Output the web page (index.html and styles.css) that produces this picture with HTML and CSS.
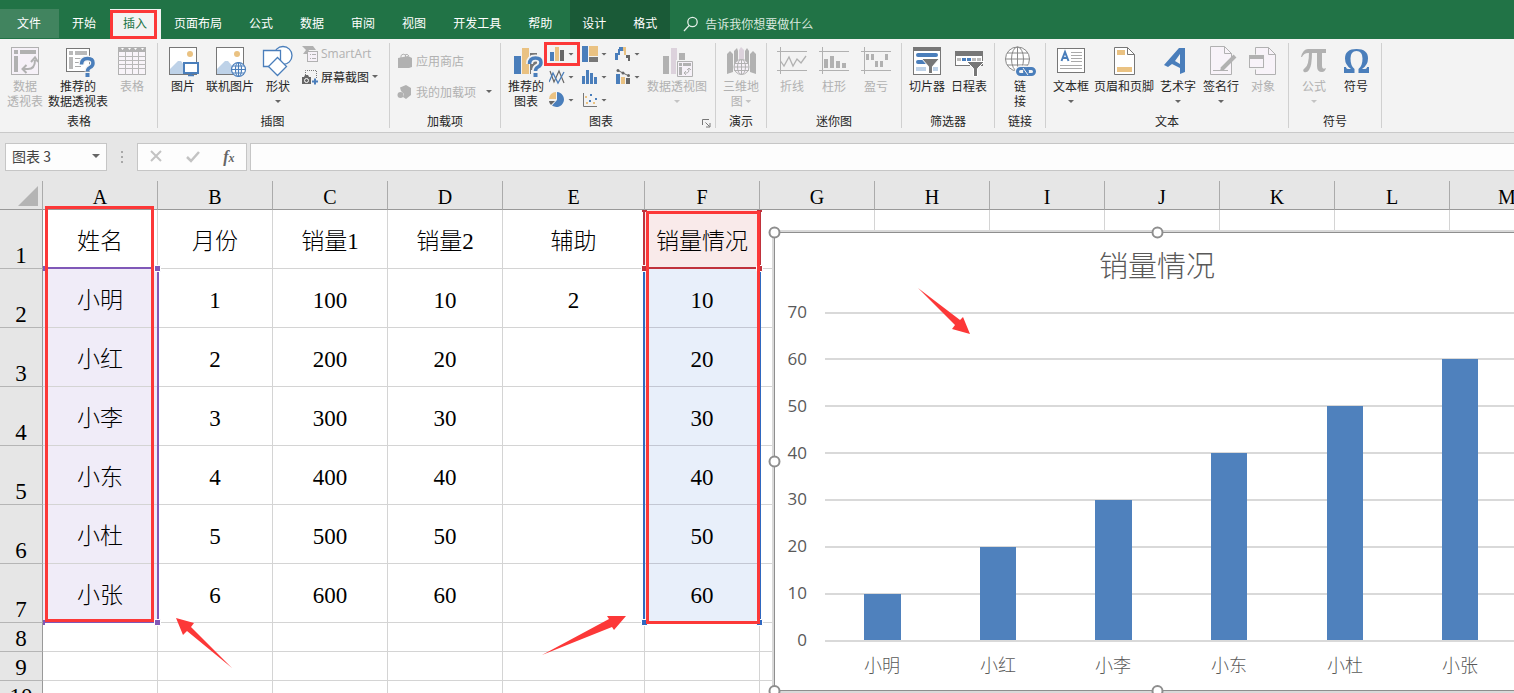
FILE: index.html
```html
<!DOCTYPE html>
<html lang="zh-CN">
<head>
<meta charset="utf-8">
<title>图表 3</title>
<link rel="stylesheet" href="styles.css">
</head>
<body>
<header class="titlebar">
  <nav class="tabs">
    <button class="tab tab-file">文件</button>
    <button class="tab">开始</button>
    <button class="tab tab-active marked">插入</button>
    <button class="tab">页面布局</button>
    <button class="tab">公式</button>
    <button class="tab">数据</button>
    <button class="tab">审阅</button>
    <button class="tab">视图</button>
    <button class="tab">开发工具</button>
    <button class="tab">帮助</button>
  </nav>
  <nav class="tabs tabs-context">
    <button class="tab">设计</button>
    <button class="tab">格式</button>
  </nav>
  <button class="tellme">
    <svg width="16" height="16" viewBox="0 0 16 16" fill="none" stroke="#e4efe8" stroke-width="1.3"><circle cx="9.5" cy="6" r="4.7"/><path d="M6.2 9.4 1 15"/></svg>
    <span>告诉我你想要做什么</span>
  </button>
</header>

<main class="ribbon">
  <section class="group group-tables">
    <div class="group-body">
      <button class="big w46" disabled>
        <svg class="ico" viewBox="0 0 32 32"><rect x="2.5" y="1.5" width="27" height="27" fill="#f6f1f8" stroke="#b1b1b1"/><path fill="#b1b1b1" d="M5 4h4v4H5zM11 4h16v4H11zM5 10h4v16H5z"/><path d="M14 23h5q7 0 7-9M17.5 19 13.5 23l4 4M22 16l4-4.5 3 4.5" fill="none" stroke="#b1b1b1" stroke-width="2"/></svg>
        <span>数据<br>透视表</span>
      </button>
      <button class="big w60">
        <svg class="ico" viewBox="0 0 32 32"><rect x="4.5" y="2.5" width="23" height="23" fill="#fff" stroke="#777"/><path fill="#b9b9b9" d="M7 5h4v4H7zM13 5h12v4H13zM7 11h4v12H7z"/><path d="M13 12.5h9M13 16.5h6M13 20.5h6" stroke="#aaa"/><path d="M19.5 18.5q0-6 6-6 5.5 0 5.5 4.5 0 3-3 4.5-2.5 1.2-2.5 4" fill="none" stroke="#f3f3f3" stroke-width="6"/><path d="M19.5 18.5q0-6 6-6 5.5 0 5.5 4.5 0 3-3 4.5-2.5 1.2-2.5 4" fill="none" stroke="#4a7ebb" stroke-width="3.5"/><rect x="23.5" y="27" width="4" height="4" fill="#4a7ebb"/></svg>
        <span>推荐的<br>数据透视表</span>
      </button>
      <button class="big w48" disabled>
        <svg class="ico" viewBox="0 0 32 32"><rect x="2.5" y="1.5" width="27" height="27" fill="#f8f4f9" stroke="#b1b1b1"/><path fill="#b1b1b1" d="M2 1h28v5H2z"/><path d="M2 10.5h28M2 14.5h28M2 18.5h28M2 22.5h28M9.5 6v23M16.5 6v23M22.5 6v23" stroke="#b8b8b8"/><path fill="#fff" d="M5 2h3l-1.5 2zM12 2h3l-1.5 2zM18 2h3l-1.5 2zM25 2h3l-1.5 2z"/></svg>
        <span>表格</span>
      </button>
    </div>
    <div class="group-name">表格</div>
  </section>

  <section class="group group-pictures">
    <div class="group-body">
      <button class="big w36">
        <svg class="ico" viewBox="0 0 32 32"><rect x="2.5" y="1.5" width="27" height="27" fill="#fff" stroke="#777"/><circle cx="23" cy="8" r="3" fill="#eac282"/><path d="M3 28V23l8-8h3l3 4v9z" fill="#bed2e8"/><rect x="16" y="16" width="16" height="12" fill="#f3f3f3"/><rect x="17" y="17" width="14" height="10" fill="#fff" stroke="#4a7ebb" stroke-width="2"/><path d="M24 27v2M21 29.500h6" stroke="#4a7ebb" stroke-width="1.500"/></svg>
        <span>图片</span>
      </button>
      <button class="big w58">
        <svg class="ico" viewBox="0 0 32 32"><rect x="2.5" y="1.5" width="27" height="27" fill="#fff" stroke="#777"/><circle cx="23" cy="8" r="3" fill="#eac282"/><path d="M3 28V23l8-8h3l6 7v6z" fill="#bed2e8"/><g fill="#fff" stroke="#4a7ebb" stroke-width="1.2"><circle cx="24.5" cy="23.5" r="7"/><ellipse cx="24.5" cy="23.5" rx="3" ry="7" fill="none"/><path d="M17.5 23.5h14M19 20h11M19 27h11M24.5 16.5v14"/></g></svg>
        <span>联机图片</span>
      </button>
      <button class="big w38">
        <svg class="ico" viewBox="0 0 32 32" fill="#fff" stroke="#4a7ebb" stroke-width="1.3"><circle cx="21" cy="9.5" r="9"/><path d="M1.5 4.5h17v16h-17z"/><path d="M15.5 11.5 24.5 20.5 15.5 29.5 6.5 20.5z"/></svg>
        <span>形状</span><i class="caret"></i>
      </button>
      <div class="stack">
        <button class="small" disabled>
          <svg width="16" height="16" viewBox="0 0 16 16"><path d="M0 0h11l3 4H7L5 8H1l3-4z" fill="#b1b1b1"/><rect x="5.5" y="5.5" width="10" height="10" fill="#f6f1f8" stroke="#b1b1b1"/><path d="M8 8.5h1m1 0h4M8 12.5h1m1 0h4" stroke="#b1b1b1"/></svg>
          <span class="latin">SmartArt</span>
        </button>
        <button class="small">
          <svg width="16" height="16" viewBox="0 0 16 16"><path d="M3.5 6V1.5h11v8" fill="none" stroke="#777" stroke-dasharray="1 1"/><path d="M0 8h2l1-2h3l1 2h2v7H0z" fill="#666"/><circle cx="4.5" cy="11.5" r="2" fill="#666" stroke="#fff"/><path d="M13 9.5v6M10 12.5h6" stroke="#4a7ebb" stroke-width="2"/></svg>
          <span>屏幕截图</span><i class="caret"></i>
        </button>
      </div>
    </div>
    <div class="group-name">插图</div>
  </section>

  <section class="group group-addins">
    <div class="group-body">
      <div class="stack stack-wide">
        <button class="small" disabled>
          <svg width="16" height="16" viewBox="0 0 16 16"><path d="M1 5 11 3l4 2v9l-3 1H1z" fill="#b1b1b1"/><path d="M4 5V2.5Q6 0 8.5 2V4M8 2q2-2 4 1" fill="none" stroke="#b1b1b1"/></svg>
          <span>应用商店</span>
        </button>
        <button class="small small-muted">
          <svg width="16" height="16" viewBox="0 0 16 16" fill="#b1b1b1"><path d="M3 3.5 9 1l5 3v7l-5 4-3-2 1-3-3-3z"/><circle cx="3.5" cy="11" r="3"/></svg>
          <span>我的加载项</span><i class="caret"></i>
        </button>
      </div>
    </div>
    <div class="group-name">加载项</div>
  </section>

  <section class="group group-charts">
    <div class="group-body">
      <button class="big">
        <svg class="ico" viewBox="0 0 32 32"><path fill="#4a7ebb" d="M4 10h7v18H4z"/><path fill="#eac282" d="M12 2h7v26h-7z"/><path fill="#777" d="M20 7h7v21h-7z"/><path d="M19.5 18q0-6 6-6 5.5 0 5.5 4.5 0 3-3 4.5-2.5 1.2-2.5 4" fill="none" stroke="#f3f3f3" stroke-width="7"/><path fill="#f3f3f3" d="M21 24h8v8h-8z"/><path d="M19.5 18q0-6 6-6 5.5 0 5.5 4.5 0 3-3 4.5-2.5 1.2-2.5 4" fill="none" stroke="#4a7ebb" stroke-width="3.5"/><rect x="23.5" y="27" width="4" height="4" fill="#4a7ebb"/></svg>
        <span>推荐的<br>图表</span>
      </button>
      <div class="chart-grid">
        <button class="mini marked" aria-label="柱形图"><svg width="16" height="16" viewBox="0 0 16 16"><path fill="#4a7ebb" d="M1 6h4v9H1z"/><path fill="#eac282" d="M6 1h4v14H6z"/><path fill="#666" d="M11 4h4v11h-4z"/></svg><i class="caret"></i></button>
        <button class="mini" aria-label="层次结构图"><svg width="16" height="16" viewBox="0 0 16 16"><path fill="#4a7ebb" d="M0 0h6v16H0z"/><path fill="#eac282" d="M7 0h9v10H7z"/><path fill="#777" d="M7 11h9v5H7z"/></svg><i class="caret"></i></button>
        <button class="mini" aria-label="瀑布图"><svg width="16" height="16" viewBox="0 0 16 16"><path fill="#4a7ebb" d="M0 7h3v7H0zM3 3h1V1h4v4H5v4H3z"/><path fill="#eac282" d="M8 1h3v8H9V5H8z"/><path fill="#666" d="M11 9h4v6h-2v-3h-2z"/></svg><i class="caret"></i></button>
        <button class="mini" aria-label="折线图"><svg width="16" height="16" viewBox="0 0 16 16" fill="none"><path d="M1 2 5 13 10 2l5 12" stroke="#666" stroke-width="1.2"/><path d="M0 13 4 4l5 10 6-11" stroke="#4a7ebb" stroke-width="1.3"/></svg><i class="caret"></i></button>
        <button class="mini" aria-label="直方图"><svg width="16" height="16" viewBox="0 0 16 16"><path fill="#4a7ebb" d="M0 7h3v8H0zM4 1h3v14H4zM8 4h3v11H8zM12 8h3v7h-3z"/></svg><i class="caret"></i></button>
        <button class="mini" aria-label="组合图"><svg width="16" height="16" viewBox="0 0 16 16"><path fill="#4a7ebb" d="M1 5h4v10H1z"/><path fill="#eac282" d="M6 8h4v7H6z"/><path fill="#666" d="M11 9h4v6h-4z"/><path d="M2 1 8 4l6 3" fill="none" stroke="#666"/><g fill="#666"><circle cx="3" cy="1.5" r="1.5"/><circle cx="8" cy="4" r="1.5"/><circle cx="13.5" cy="6.5" r="1.5"/></g></svg><i class="caret"></i></button>
        <button class="mini" aria-label="饼图"><svg width="16" height="16" viewBox="0 0 16 16"><path fill="#4a7ebb" d="M8 8V0a7.500 7.500 0 1 1-5 13.500z"/><path fill="#eac282" d="M7 7V0A7 7 0 0 0 0 7z"/><path fill="#666" d="M0 9h6l-4 4Q0 11 0 9z"/></svg><i class="caret"></i></button>
        <button class="mini" aria-label="散点图"><svg width="16" height="16" viewBox="0 0 16 16"><path d="M1.5 1v13.5H15" fill="none" stroke="#777"/><path fill="#4a7ebb" d="M8 2h2v2H8zM7 8h2v2H7zM13 6h2v2h-2z"/><path fill="#eac282" d="M3 4h2v2H3zM4 10h2v2H4zM11 10h2v2h-2z"/></svg><i class="caret"></i></button>
      </div>
      <button class="big w60" disabled>
        <svg class="ico" viewBox="0 0 32 32"><path fill="#b1b1b1" d="M2 10h6v18H2zM18 7h6v21h-6z"/><path fill="#dcd2dc" d="M10 2h6v26h-6z"/><rect x="15" y="14" width="18" height="18" fill="#f3f3f3"/><path d="M16.5 15.5h15v15h-15z" fill="#f6f1f8" stroke="#b1b1b1"/><path fill="#b1b1b1" d="M18 17h3v3h-3zM22 17h8v3h-8zM18 21h3v8h-3z"/><path d="M23 27h3q2 0 2-4M25 25l-2 2 2 2M26 24l2-2 2 2" fill="none" stroke="#b1b1b1"/></svg>
        <span>数据透视图</span><i class="caret"></i>
      </button>
    </div>
    <div class="group-name">图表</div>
    <button class="launcher" aria-label="图表对话框"><svg width="9" height="9" viewBox="0 0 9 9" fill="none" stroke="#777"><path d="M.5 6V.5H7M3.5 3.5l4 4M8 4v4H4"/></svg></button>
  </section>

  <section class="group">
    <div class="group-body">
      <button class="big" disabled>
        <svg class="ico" viewBox="0 0 32 32"><path fill="#b1b1b1" d="M2 8l3-3 3 3v18l-6 2zM25 8l3-3 3 3v20l-6-2z"/><path fill="#b1b1b1" d="M9 5l3-3 1 3v20H9zM20 5l2-3 2 3v20h-4z"/><path fill="#dcd2dc" d="M14 4l2-3 3 3v14h-5z"/><g fill="#f6f1f8" stroke="#b1b1b1"><circle cx="16.5" cy="21" r="7.5"/><ellipse cx="16.5" cy="21" rx="4" ry="7.5"/><path d="M9 21h15M10 17.500h13M10 24.500h13M16.5 13.500v15"/></g></svg>
        <span>三维地<br>图 <i class="caret caret-inline"></i></span>
      </button>
    </div>
    <div class="group-name">演示</div>
  </section>

  <section class="group">
    <div class="group-body">
      <button class="big" disabled>
        <svg class="ico" viewBox="0 0 32 32"><path d="M1 5.5h30M1 24.5h30M4.5 1v27" stroke="#b1b1b1" fill="none"/><path d="M4.5 15 8 20l5-9 4 9 4-7 4 4 5-7" stroke="#b1b1b1" fill="none" stroke-width="1.3"/></svg>
        <span>折线</span>
      </button>
      <button class="big" disabled>
        <svg class="ico" viewBox="0 0 32 32"><path d="M1 5.5h30M1 24.5h30M4.5 1v27" stroke="#b1b1b1" fill="none"/><path fill="#b1b1b1" d="M6 13h4v9H6zM12 10h4v12h-4zM18 15h4v7h-4zM24 17h4v5h-4z"/></svg>
        <span>柱形</span>
      </button>
      <button class="big" disabled>
        <svg class="ico" viewBox="0 0 32 32"><path d="M1 5.5h30M1 24.5h30M4.5 1v27" stroke="#b1b1b1" fill="none"/><path fill="#b1b1b1" d="M6 8h3v6H6zM11 8h3v6h-3zM15 15h3v6h-3zM20 15h3v6h-3zM25 8h3v6h-3z"/></svg>
        <span>盈亏</span>
      </button>
    </div>
    <div class="group-name">迷你图</div>
  </section>

  <section class="group">
    <div class="group-body">
      <button class="big">
        <svg class="ico" viewBox="0 0 32 32"><rect x="2.5" y="1.5" width="27" height="27" fill="#fff" stroke="#777"/><path fill="#777" d="M2 1h28v4H2z"/><path stroke="#4a7ebb" stroke-width="4" stroke-linecap="round" d="M7 9h18M7 16h8"/><path stroke="#bed2e8" stroke-width="4" d="M5 23h10M22 23h5"/><path fill="#777" stroke="#fff" d="M10.5 12.5h18l-7 8v7h-4v-7z"/></svg>
        <span>切片器</span>
      </button>
      <button class="big">
        <svg class="ico" viewBox="0 0 32 32"><rect x="2.5" y="5.5" width="27" height="14" fill="#fff" stroke="#777"/><path fill="#777" d="M2 5h28v5H2z"/><path fill="#4a7ebb" d="M9 12h4v3H9zM14 12h4v3h-4z"/><path fill="#bbb" d="M4 12h4v3H4zM19 12h4v3h-4zM24 12h4v3h-4z"/><path fill="#777" stroke="#fff" d="M13.5 15.5h18l-7 7v8h-4v-8z"/></svg>
        <span>日程表</span>
      </button>
    </div>
    <div class="group-name">筛选器</div>
  </section>

  <section class="group">
    <div class="group-body">
      <button class="big">
        <svg class="ico" viewBox="0 0 32 32" fill="none"><g stroke="#888" fill="#fff"><circle cx="13.5" cy="13" r="12"/><ellipse cx="13.5" cy="13" rx="6" ry="12"/><path d="M1.5 13h24M3 7h21M3 19h21M13.5 1v24"/></g><g stroke="#f3f3f3" stroke-width="6"><rect x="13.5" y="22.5" width="9" height="6" rx="3"/><rect x="21.5" y="22.5" width="9" height="6" rx="3"/></g><g stroke="#4a7ebb" stroke-width="3"><rect x="13.5" y="22.5" width="10" height="6" rx="3"/><rect x="20.5" y="22.5" width="10" height="6" rx="3"/></g><path d="M19 22l5 7" stroke="#f3f3f3"/></svg>
        <span>链<br>接</span>
      </button>
    </div>
    <div class="group-name">链接</div>
  </section>

  <section class="group">
    <div class="group-body">
      <button class="big">
        <svg class="ico" viewBox="0 0 32 32"><rect x="2.5" y="2.5" width="27" height="24" fill="#fff" stroke="#777"/><path d="M6.5 15 10 6l3.5 9M8 12h4" fill="none" stroke="#4a7ebb" stroke-width="2"/><path d="M16 6.5h11M16 9.5h11M16 12.5h11M16 15.5h11M5 19.5h22M5 22.5h22" stroke="#aaa"/></svg>
        <span>文本框</span><i class="caret"></i>
      </button>
      <button class="big w64">
        <svg class="ico" viewBox="0 0 32 32"><path d="M6.5 1.5h13l7 7v20h-20z" fill="#fff" stroke="#777"/><path d="M19.5 1.5v7h7" fill="none" stroke="#777"/><path fill="#eac282" d="M9 4h8v5H9zM9 21h15v5H9z"/></svg>
        <span>页眉和页脚</span>
      </button>
      <button class="big w44">
        <svg class="ico" viewBox="0 0 32 32"><path d="M17 2h6v24l-5 2V22l-8-4-4 3-4-2zM18 8l-5 7 5 3z" fill="#4a7ebb" fill-rule="evenodd"/></svg>
        <span>艺术字</span><i class="caret"></i>
      </button>
      <button class="big">
        <svg class="ico" viewBox="0 0 32 32"><path d="M5.5.5h14l7 7v21h-21z" fill="#f8f3f9" stroke="#b1b1b1"/><path d="M19.5.5v7h7M8 24.5h15" fill="none" stroke="#b1b1b1"/><path d="M17 23 30 10" stroke="#b1b1b1" stroke-width="4"/><path d="M15 25l1-4 3 3z" fill="#b1b1b1"/></svg>
        <span>签名行</span><i class="caret"></i>
      </button>
      <button class="big" disabled>
        <svg class="ico" viewBox="0 0 32 32"><path d="M8.5 1.5h13l7 7v20h-20z" fill="#f8f3f9" stroke="#b1b1b1"/><path d="M21.5 1.5v7h7" fill="none" stroke="#b1b1b1"/><rect x="1.500" y="8.500" width="16" height="15" fill="#f3f3f3"/><rect x="2.5" y="9.5" width="14" height="12" fill="#f8f3f9" stroke="#b1b1b1"/><path fill="#b1b1b1" d="M2 9h15v4H2z"/></svg>
        <span>对象</span>
      </button>
    </div>
    <div class="group-name">文本</div>
  </section>

  <section class="group">
    <div class="group-body">
      <button class="big" disabled>
        <svg class="ico" viewBox="0 0 32 32" fill="#b1b1b1"><path d="M3 11Q5 3 10 3h18v4H10q-4 0-6 4z"/><path d="M11 6h3q0 14-3 18-2 3-5 2-2-2 1-4 4-3 4-16zM19 6h5v14q0 4 4 2-1 4-4 4-5 0-5-6z"/></svg>
        <span>公式</span><i class="caret"></i>
      </button>
      <button class="big">
        <svg class="ico" viewBox="0 0 32 32"><path d="M4 21h2q0 2 3 2h2Q5 19 5 12.5 5 3 16.500 3T28 12.5Q28 19 22 23h2q3 0 3-2h2v6H18.500v-4q4-3 4-10.500Q22.500 5 16.500 5t-6 7.500q0 7.500 4 10.500v4H4z" fill="#4a7ebb"/></svg>
        <span>符号</span>
      </button>
    </div>
    <div class="group-name">符号</div>
  </section>
</main>

<section class="formula-bar">
  <button class="name-box"><span>图表 3</span><i class="caret"></i></button>
  <span class="grip"><i></i><i></i><i></i></span>
  <div class="formula-tools">
    <button aria-label="取消"><svg width="14" height="14" viewBox="0 0 14 14" fill="none" stroke="#c3c3c3" stroke-width="2"><path d="M2 2l10 10M12 2 2 12"/></svg></button>
    <button aria-label="输入"><svg width="14" height="14" viewBox="0 0 14 14" fill="none" stroke="#c3c3c3" stroke-width="2.5"><path d="M1 8l4 4 8-9"/></svg></button>
    <button class="fx">f<sub>x</sub></button>
  </div>
  <input class="formula-input" type="text" aria-label="编辑栏">
</section>

<section class="sheet">
  <table class="grid">
    <colgroup><col class="c-head"><col><col><col><col><col class="c-wide"><col><col><col><col><col><col><col><col></colgroup>
    <thead>
      <tr><th class="corner"><svg width="22" height="22" viewBox="0 0 22 22"><path d="M21 1v20H1z" fill="#b4b4b4"/></svg></th><th>A</th><th>B</th><th>C</th><th>D</th><th>E</th><th>F</th><th>G</th><th>H</th><th>I</th><th>J</th><th>K</th><th>L</th><th>M</th></tr>
    </thead>
    <tbody>
      <tr><th>1</th><td>姓名</td><td>月份</td><td>销量1</td><td>销量2</td><td>辅助</td><td class="pink">销量情况</td><td></td><td></td><td></td><td></td><td></td><td></td><td></td></tr>
      <tr><th>2</th><td class="violet">小明</td><td>1</td><td>100</td><td>10</td><td>2</td><td class="blue">10</td><td></td><td></td><td></td><td></td><td></td><td></td><td></td></tr>
      <tr><th>3</th><td class="violet">小红</td><td>2</td><td>200</td><td>20</td><td></td><td class="blue">20</td><td></td><td></td><td></td><td></td><td></td><td></td><td></td></tr>
      <tr><th>4</th><td class="violet">小李</td><td>3</td><td>300</td><td>30</td><td></td><td class="blue">30</td><td></td><td></td><td></td><td></td><td></td><td></td><td></td></tr>
      <tr><th>5</th><td class="violet">小东</td><td>4</td><td>400</td><td>40</td><td></td><td class="blue">40</td><td></td><td></td><td></td><td></td><td></td><td></td><td></td></tr>
      <tr><th>6</th><td class="violet">小杜</td><td>5</td><td>500</td><td>50</td><td></td><td class="blue">50</td><td></td><td></td><td></td><td></td><td></td><td></td><td></td></tr>
      <tr><th>7</th><td class="violet">小张</td><td>6</td><td>600</td><td>60</td><td></td><td class="blue">60</td><td></td><td></td><td></td><td></td><td></td><td></td><td></td></tr>
      <tr class="short"><th>8</th><td></td><td></td><td></td><td></td><td></td><td></td><td></td><td></td><td></td><td></td><td></td><td></td><td></td></tr>
      <tr class="short"><th>9</th><td></td><td></td><td></td><td></td><td></td><td></td><td></td><td></td><td></td><td></td><td></td><td></td><td></td></tr>
      <tr class="short"><th>10</th><td></td><td></td><td></td><td></td><td></td><td></td><td></td><td></td><td></td><td></td><td></td><td></td><td></td></tr>
    </tbody>
  </table>

  <svg class="chart" width="780" height="476" viewBox="768 224 780 476" role="img" aria-label="销量情况">
    <rect x="772" y="230" width="770" height="463" fill="#d9d9d9"/>
    <rect x="774.5" y="232.5" width="766" height="458" fill="#fff" stroke="#8e8e8e"/>
    <text class="chart-title" x="1157" y="277">销量情况</text>
    <path d="M825 313H1519M825 359H1519M825 406H1519M825 453H1519M825 500H1519M825 547H1519M825 594H1519M825 641H1519" stroke="#d9d9d9" stroke-width="2"/>
    <g class="axis-y"><text x="807" y="318">70</text><text x="807" y="365">60</text><text x="807" y="412">50</text><text x="807" y="459">40</text><text x="807" y="505">30</text><text x="807" y="552">20</text><text x="807" y="599">10</text><text x="807" y="646">0</text></g>
    <g fill="#4f81bd"><rect x="864" y="594" width="37" height="46"/><rect x="980" y="547" width="36" height="93"/><rect x="1095" y="500" width="37" height="140"/><rect x="1211" y="453" width="36" height="187"/><rect x="1327" y="406" width="36" height="234"/><rect x="1442" y="359" width="36" height="281"/></g>
    <g class="axis-x"><text x="882" y="672">小明</text><text x="998" y="672">小红</text><text x="1113" y="672">小李</text><text x="1229" y="672">小东</text><text x="1345" y="672">小杜</text><text x="1460" y="672">小张</text></g>
    <g fill="#fff" stroke="#8e8e8e" stroke-width="2"><circle cx="774.5" cy="232.5" r="5"/><circle cx="1157.5" cy="232.5" r="5"/><circle cx="774.5" cy="461.5" r="5"/><circle cx="774.5" cy="691" r="5"/><circle cx="1157.5" cy="691" r="5"/></g>
  </svg>

  <svg class="marks" width="1514" height="512" viewBox="0 181 1514 512">
    <g fill="none" stroke-width="2"><path d="M43 268H158V622H43" stroke="#8058b8"/><path d="M644 211V268H760V211" stroke="#c0323c"/><path d="M644 270V622H760V270" stroke="#2f68c0"/></g>
    <g stroke="#fff"><path fill="#8058b8" d="M154.5 265.5h6v6h-6zM154.5 619.5h6v6h-6z"/><path fill="#c0323c" d="M641.5 265.5h6v6h-6zM756.5 265.5h6v6h-6z"/><path fill="#2f68c0" d="M641.5 619.5h6v6h-6zM756.5 619.5h6v6h-6z"/></g>
    <path fill="#8058b8" d="M43 266h3v5h-3zM43 620h2v5h-2z"/><path fill="#c0323c" d="M642 210h5v2h-5zM757 210h5v2h-5z"/>
    <g fill="none" stroke="#fc3838" stroke-width="3"><rect x="46.5" y="207.5" width="106" height="413"/><rect x="647.5" y="212.5" width="111" height="410"/></g>
    <g fill="#fc3838"><path d="M176 618l18 5-3 4 41 41-45-37-4 4z"/><path d="M626 616h-19l2 3-67 36 70-28 2 3z"/><path d="M970 334l-7-17-3 3-42-32 37 37-3 4z"/></g>
  </svg>
</section>
</body>
</html>
```
FILE: styles.css
```css
* { box-sizing: border-box; }
body {
  margin: 0;
  height: 100vh;
  overflow: hidden;
  display: flex;
  flex-direction: column;
  background: #e6e6e6;
  color: #262626;
  font: 12px/15px "Noto Sans CJK SC", "Noto Sans", sans-serif;
}
button {
  margin: 0;
  padding: 0;
  border: 0;
  background: none;
  color: inherit;
  font: inherit;
  white-space: nowrap;
}
button:disabled, .small-muted { color: #b1b1b1; }

/* Title bar and tabs */
.titlebar {
  flex: none;
  display: flex;
  height: 39px;
  background: #217346;
  color: #fff;
}
.tabs { display: flex; padding-top: 9px; }
.tab { padding: 0 14px 4px 13px; }
.tab-file { padding: 0 18px 3px 17px; margin-bottom: 1px; background: #41845f; }
.tab-active { background: #f3f3f3; color: #217346; }
.marked { position: relative; }
.marked::after {
  content: "";
  position: absolute;
  inset: 1px 4px 0 0;
  border: 3px solid #fc3838;
}
.tabs-context { margin-left: 4px; background: #1a5a37; }
.tabs-context .tab { padding: 0 13px 4px 12px; }
.tabs-context .tab:last-child { padding-left: 14px; }
.tellme {
  display: flex;
  align-items: center;
  gap: 6px;
  padding: 8px 0 0 13px;
  color: #d9e8df;
}

/* Ribbon */
.ribbon {
  flex: none;
  display: flex;
  padding: 4px 0;
  background: #f3f3f3;
  border-bottom: 1px solid #c9c9c9;
  overflow: hidden;
}
.group {
  position: relative;
  flex: none;
  display: flex;
  flex-direction: column;
  padding: 3px 4px 0;
  border-right: 1px solid #d0d0d0;
}
.group-tables { padding-left: 2px; padding-right: 1px; }
.group-pictures { padding-left: 7px; padding-right: 9px; }
.group-charts { padding-right: 8px; }
.group-body { display: flex; height: 67px; }
.group-name { line-height: 15px; text-align: center; }
.group-charts .group-name { padding-right: 10px; }
.big {
  width: 42px;
  display: flex;
  flex-direction: column;
  align-items: center;
}
.w36 { width: 36px; }
.w38 { width: 38px; }
.w44 { width: 44px; }
.w46 { width: 46px; }
.w48 { width: 48px; }
.w58 { width: 58px; }
.w60 { width: 60px; }
.w64 { width: 64px; }
.ico { width: 32px; height: 32px; overflow: visible; }
.caret {
  flex: none;
  display: block;
  width: 6px;
  height: 3px;
  background: #666;
  clip-path: polygon(0 0, 100% 0, 50% 100%);
}
.big .caret { margin-top: 7px; }
.big .caret-inline { display: inline-block; margin: 0 0 3px; }
button:disabled .caret { background: #c4c4c4; }
.stack {
  display: flex;
  flex-direction: column;
  gap: 8px;
  width: 83px;
  padding-left: 5px;
}
.stack-wide { width: 102px; padding: 7px 0 0 3px; gap: 16px; }
.small { display: flex; align-items: center; gap: 3px; height: 15px; }
.stack-wide .caret { margin-left: 7px; }
.latin { font: 12px/15px "Open Sans", "Noto Sans", sans-serif; }
.chart-grid {
  display: grid;
  grid-template-columns: repeat(3, 33px);
  grid-auto-rows: 23px;
  width: 100px;
  padding-left: 1px;
}
.mini { display: flex; align-items: center; gap: 3px; height: 16px; padding-left: 1px; }
.mini.marked::after { inset: -4px 1px -4px -4px; }
.launcher { position: absolute; right: 4px; bottom: 0; line-height: 9px; }

/* Formula bar */
.formula-bar {
  flex: none;
  display: flex;
  align-items: stretch;
  padding: 10px 0 10px 5px;
}
.name-box, .formula-tools, .formula-input {
  height: 28px;
  background: #fdfdfd;
  border: 1px solid #c6c6c6;
}
.name-box {
  width: 102px;
  display: flex;
  align-items: center;
  justify-content: space-between;
  padding: 0 6px 2px;
  color: #444;
  font-size: 14px;
}
.name-box .caret { width: 8px; height: 4px; }
.grip {
  width: 30px;
  display: flex;
  flex-direction: column;
  align-items: center;
  justify-content: center;
  gap: 3px;
}
.grip i { width: 2px; height: 2px; background: #a8a8a8; }
.formula-tools { width: 110px; display: flex; align-items: center; justify-content: space-around; margin-right: 3px; }
.fx { color: #666; font: italic bold 16px/18px "Liberation Serif", serif; }
.fx sub { font-size: 12px; line-height: 0; vertical-align: baseline; }
.formula-input { flex: 1; min-width: 0; border-right: 0; }

/* Worksheet */
.sheet { position: relative; flex: 1; min-height: 0; overflow: hidden; background: #fff; }
.grid {
  table-layout: fixed;
  width: 1565px;
  border-collapse: separate;
  border-spacing: 0;
  color: #000;
  font: 300 23px/28px "Liberation Serif", "Noto Sans CJK SC", serif;
}
.grid col { width: 115px; }
.grid .c-head { width: 43px; }
.grid .c-wide { width: 142px; }
.grid th, .grid td {
  padding: 0;
  text-align: center;
  font-weight: 300;
  border-right: 1px solid #d4d4d4;
  border-bottom: 1px solid #d4d4d4;
}
.grid td { padding-top: 5px; }
.grid .short td { padding-top: 0; }
.grid tr { height: 59px; }
.grid .short, .grid thead tr { height: 29px; }
.grid th { background: #e6e6e6; }
.grid thead th {
  padding-top: 4px;
  line-height: 24px;
  font-size: 20px;
  border-color: #ababab;
  border-bottom-color: #999;
}
.grid thead .corner { padding: 0 3px 2px 0; text-align: right; line-height: 0; vertical-align: bottom; }
.grid tbody th { vertical-align: bottom; line-height: 24px; border-color: #b5b5b5; border-right-color: #999; }
.grid .violet { background: #f0ecf8; }
.grid .pink { background: #f9eaea; }
.grid .blue { background: #e8effa; border-bottom-color: #c3c7d3; }

/* Chart and callouts float over the cells */
.chart { position: absolute; left: 768px; top: 43px; }
.marks { position: absolute; left: 0; top: 0; pointer-events: none; }
.chart text { fill: #595959; }
.chart-title { font: 300 29px "Noto Sans CJK SC", sans-serif; text-anchor: middle; }
.axis-y { font: 17px "Open Sans", "Noto Sans", sans-serif; text-anchor: end; }
.axis-x { font: 300 18px "Noto Sans CJK SC", sans-serif; text-anchor: middle; }
```
